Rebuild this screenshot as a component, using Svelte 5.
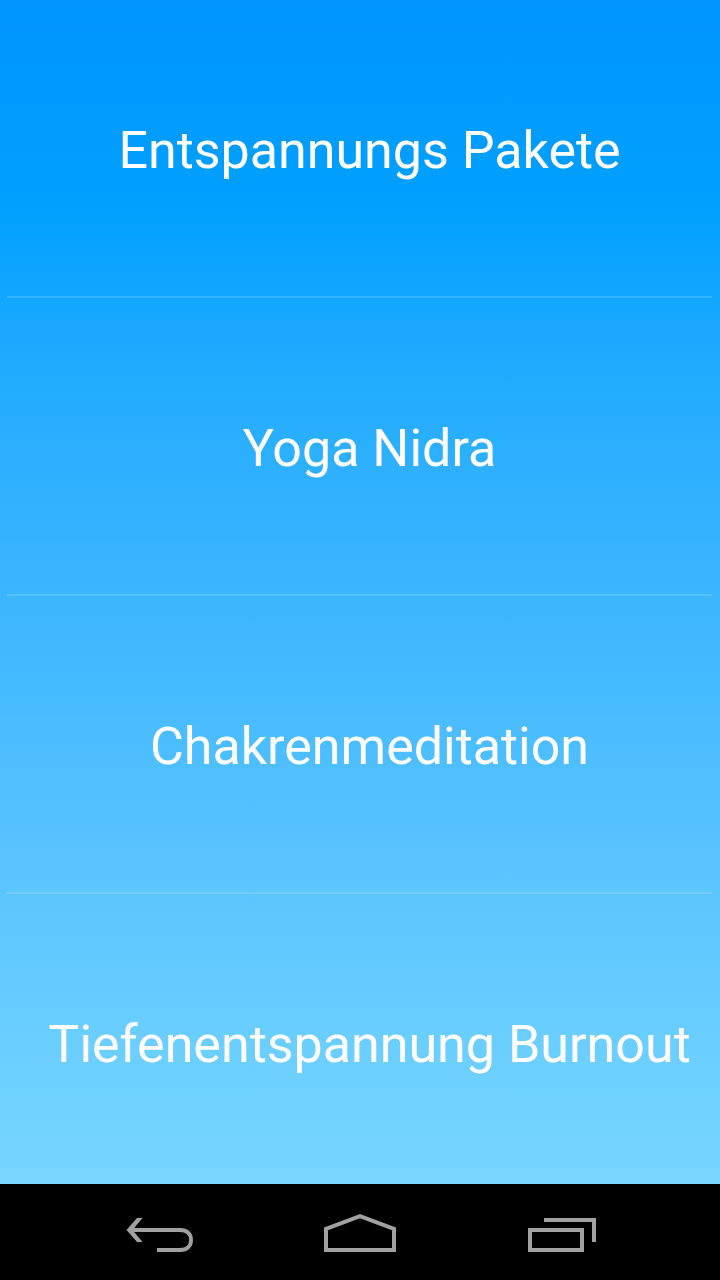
<script lang="ts">
	let selected = $state("");

	const items = [
		"Entspannungs Pakete",
		"Yoga Nidra",
		"Chakrenmeditation",
		"Tiefenentspannung Burnout",
	];

	const select = (item: string) => {
		selected = item;
	};
</script>

<div class="screen">
	<main>
		<ul>
			{#each items as item}
				<li>
					<button
						class="item"
						aria-pressed={selected === item}
						onclick={() => select(item)}
					>
						{item}
					</button>
				</li>
			{/each}
		</ul>
	</main>

	<nav>
		<button class="key" aria-label="Back">
			<svg viewBox="0 0 80 56">
				<path class="fill" d="M6.5 26 17 14h5.500L12.500 26l10 12H17z" />
				<path d="M10 26H60C67 26 71 30 71 36S67 46 60 46H37" />
			</svg>
		</button>
		<button class="key" aria-label="Home">
			<svg viewBox="0 0 80 56">
				<path d="M6 46V25L40 12.200 74 25V46Z" />
			</svg>
		</button>
		<button class="key" aria-label="Recent apps">
			<svg viewBox="0 0 80 56">
				<path d="M10 26H62V46H10Z" />
				<path d="M24 16H74V38" />
			</svg>
		</button>
	</nav>
</div>

<style>
	:global(body) {
		margin: 0;
	}

	.screen {
		display: flex;
		flex-flow: column nowrap;
		height: 100vh;
		font-family: Roboto, sans-serif;
	}

	main {
		background: linear-gradient(
			#0095ff,
			#00a0ff 17%,
			#26adff 34%,
			#3cb5ff 50%,
			#5bc5ff 75%,
			#78d6ff
		);
		flex: 1;
		min-height: 0;
		overflow-y: auto;
		scrollbar-width: none;
	}

	ul {
		list-style: none;
		margin: 0;
		padding: 0 8px 0 7px;
	}

	li + li {
		border-top: 2px solid rgba(255, 255, 255, 0.15);
	}

	button {
		background: none;
		border: 0;
		cursor: pointer;
		font: inherit;
		padding: 0;
	}

	.item {
		color: #fff;
		display: block;
		font-size: 52px;
		height: 296px;
		line-height: 60px;
		padding: 6px 0 0 20px;
		width: 100%;
	}

	nav {
		align-items: center;
		background: #000;
		display: flex;
		flex: none;
		gap: 120px;
		height: 96px;
		justify-content: center;
	}

	.key,
	svg {
		display: block;
		height: 56px;
		width: 80px;
	}

	path {
		fill: none;
		stroke: #a1a1a1;
		stroke-width: 4;
	}

	path.fill {
		fill: #a1a1a1;
		stroke: none;
	}
</style>
